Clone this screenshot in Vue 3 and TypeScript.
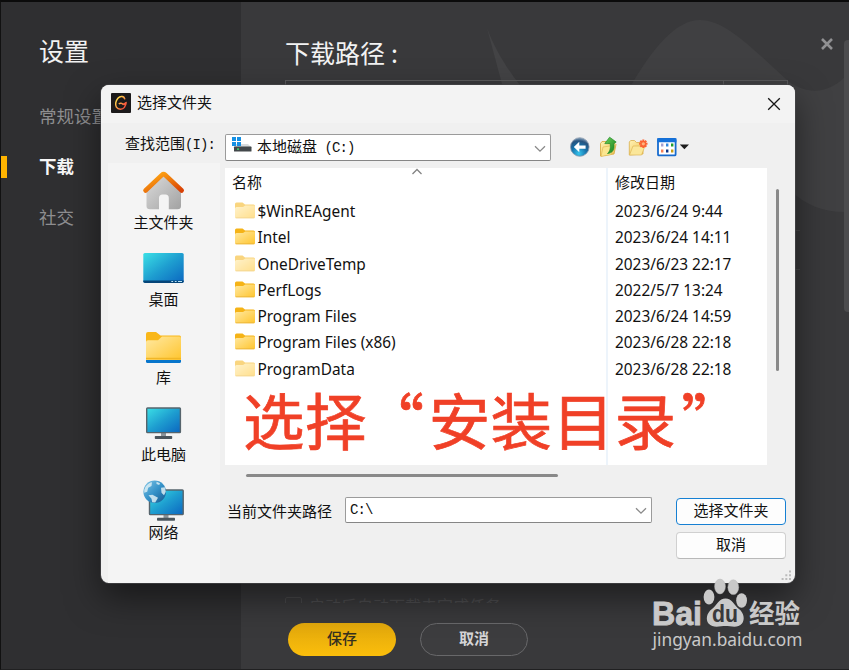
<script setup lang="ts">
interface Entry {
  name: string
  date: string
  hidden: boolean
}

const nav: { label: string; active: boolean }[] = [
  { label: '常规设置', active: false },
  { label: '下载', active: true },
  { label: '社交', active: false },
]

const entries: Entry[] = [
  { name: '$WinREAgent', date: '2023/6/24 9:44', hidden: true },
  { name: 'Intel', date: '2023/6/24 14:11', hidden: false },
  { name: 'OneDriveTemp', date: '2023/6/23 22:17', hidden: true },
  { name: 'PerfLogs', date: '2022/5/7 13:24', hidden: false },
  { name: 'Program Files', date: '2023/6/24 14:59', hidden: false },
  { name: 'Program Files (x86)', date: '2023/6/28 22:18', hidden: false },
  { name: 'ProgramData', date: '2023/6/28 22:18', hidden: true },
]
</script>

<template>
  <div class="screen">
    <aside class="sidebar">
      <h1>设置</h1>
      <nav>
        <div v-for="n in nav" :key="n.label" class="nav-item" :class="{ active: n.active }">{{ n.label }}</div>
      </nav>
    </aside>

    <main class="main">
      <svg class="waves" width="608" height="250" viewBox="241 0 608 250">
        <path d="M487 28 L502 84 L530 104 L519 84 C507 68 495 50 487 28Z" fill="#434345" />
        <path d="M632 84 C653 48 676 20 700 20 C726 20 754 50 788 81 C808 96 832 94 849 72 V212 C826 213 806 206 790 190 L640 150Z" fill="#404042" />
      </svg>
      <div class="path-section">
        <h2>下载路径<span>:</span></h2>
        <div class="path-box"><div class="path-value"></div></div>
        <div class="second-box"></div>
      </div>
      <div class="ghost">
        <i></i><span>启动后自动下载未完成任务</span>
      </div>
      <div class="actions">
        <button class="pill save">保存</button>
        <button class="pill cancel">取消</button>
      </div>
      <svg class="page-close" width="14" height="14" viewBox="0 0 14 14">
        <path d="M2 2 L12 12 M12 2 L2 12" stroke="#919193" stroke-width="2.6" />
      </svg>
      <div class="page-scroll"></div>
    </main>

    <section class="dialog">
      <header class="titlebar">
        <svg width="20" height="20" viewBox="0 0 20 20">
          <defs>
            <linearGradient id="logo" x1="0" y1="0" x2="1" y2="1">
              <stop offset="0.2" stop-color="#ffd34b" />
              <stop offset="0.9" stop-color="#f5483b" />
            </linearGradient>
          </defs>
          <rect width="20" height="20" rx="1" fill="#1c1a1b" />
          <path d="M13.8 6.4 C13.4 2.8 9.2 2.6 6.9 5.2 C4.6 8 4 12 5.4 14.2 C7.2 17 11.6 16.8 13.4 14.4 C14.4 13 14.8 11.4 14.9 9.8 L12.2 11.4 C11 10 9.2 9.8 7.8 11" fill="none" stroke="url(#logo)" stroke-width="1.5" stroke-linejoin="round" />
          <path d="M11.6 11.4 L15.8 8.4 L15 12.4Z" fill="#fb5a3e" />
        </svg>
        <span class="title">选择文件夹</span>
        <svg class="close" width="14" height="14" viewBox="0 0 14 14">
          <path d="M1.2 1.2 L12.8 12.8 M12.8 1.2 L1.2 12.8" stroke="#161616" stroke-width="1.3" />
        </svg>
      </header>

      <div class="toolbar">
        <label>查找范围<span class="mono">(I):</span></label>
        <div class="combo drive">
          <svg width="20" height="16" viewBox="0 0 20 16">
            <path d="M4 7 H16 L19 10 H2Z" fill="#d9dcde" />
            <path d="M0 0h4v4H0zM5 0h4v4H5zM0 5h4v4H0zM5 5h4v4H5z" fill="#1590e4" />
            <rect x="2" y="9.6" width="17.5" height="5" rx=".6" fill="#43484b" />
            <rect x="5" y="11.4" width="2" height="1.4" fill="#36df6b" />
          </svg>
          <span class="combo-text">本地磁盘<span class="mono">&nbsp;(C:)</span></span>
          <svg class="chev" width="12" height="8" viewBox="0 0 12 8"><path d="M1 1.2 L6 6.2 L11 1.2" fill="none" stroke="#8a8a8a" stroke-width="1.3" /></svg>
        </div>
        <svg class="tools" width="122" height="24" viewBox="568 135 122 24">
          <defs>
            <radialGradient id="back" cx=".45" cy=".85" r=".9">
              <stop offset="0" stop-color="#35c5ee" />
              <stop offset=".45" stop-color="#1672ab" />
              <stop offset=".75" stop-color="#28547f" />
              <stop offset="1" stop-color="#a6bacd" />
            </radialGradient>
            <linearGradient id="paper" x1="0" y1="0" x2="1" y2="1">
              <stop offset="0" stop-color="#fff2b5" />
              <stop offset="1" stop-color="#efc150" />
            </linearGradient>
            <linearGradient id="green" x1="0" y1="0" x2="1" y2="1">
              <stop offset="0" stop-color="#6ed35b" />
              <stop offset="1" stop-color="#137b1c" />
            </linearGradient>
          </defs>
          <circle cx="579.8" cy="147" r="9.3" fill="url(#back)" stroke="#8b9cae" stroke-width=".8" />
          <path d="M573.8 147 L579.3 141.7 V145.4 H585.6 V148.7 H579.3 V152.3Z" fill="#fff" />
          <path d="M600.5 156 V143.5 L602 141.5 H606 L608 143.5 H615 L616 144.5 L614 154Z" fill="url(#paper)" stroke="#d5a638" stroke-width=".8" />
          <path d="M603 147 L613 145.5 L611.5 154.5 L601 156.5Z" fill="#fbe690" stroke="#ddb34c" stroke-width=".6" />
          <path d="M607.5 153.5 C610.4 151 610.6 147.5 610.2 143.6 H604.8 L609.6 137.2 L616.2 142 L613.8 143.6 C615 149.5 612.5 153.2 607.5 153.5Z" fill="url(#green)" stroke="#218b26" stroke-width=".7" />
          <path d="M629.3 155 V142 L630.7 140.5 H634.5 L636.5 142.5 H643 V154Z" fill="url(#paper)" stroke="#d9af4c" stroke-width=".8" />
          <path d="M629.5 155 L633 146 H645 L641.5 155Z" fill="#fbe79a" stroke="#dfb758" stroke-width=".7" />
          <path d="M643.3 139.6 V148 M639.1 143.8 H647.5 M640.3 140.8 L646.3 146.8 M646.3 140.8 L640.3 146.8" stroke="#fb6233" stroke-width="2" />
          <circle cx="643.3" cy="143.8" r="1.6" fill="#ffb27c" />
          <rect x="658" y="139" width="17.6" height="16.4" rx="1" fill="#fff" stroke="#176bce" stroke-width="1.8" />
          <path d="M657.2 138.2 H676.4 V142.2 H657.2Z" fill="#1571d9" />
          <path d="M661 143.5h2.4v3H661z" fill="#a5a0cf" /><path d="M666 143.5h2.4v3H666z" fill="#3387dc" /><path d="M671 143.5h2.4v3H671z" fill="#1e9c2b" />
          <path d="M661 149.6h2.4v3H661z" fill="#f67f55" /><path d="M666 149.6h2.4v3H666z" fill="#0c3384" /><path d="M671 149.6h2.4v3H671z" fill="#c99b10" />
          <path d="M679.8 144.5 H689 L684.4 149.3Z" fill="#1c1c1c" />
        </svg>
      </div>

      <div class="body">
        <div class="places">
          <svg width="0" height="0" class="defs">
            <defs>
              <linearGradient id="roof" x1="0" y1="0" x2="1" y2="1">
                <stop offset=".2" stop-color="#fb9d12" /><stop offset="1" stop-color="#d84005" />
              </linearGradient>
              <linearGradient id="wall" x1="0" y1="0" x2="1" y2="1">
                <stop offset="0" stop-color="#dcdcdc" /><stop offset="1" stop-color="#a2a2a2" />
              </linearGradient>
              <linearGradient id="blue" x1="0" y1="0" x2="1" y2="1">
                <stop offset="0" stop-color="#3be0e6" /><stop offset=".5" stop-color="#1e9ed0" /><stop offset="1" stop-color="#0b66c0" />
              </linearGradient>
              <linearGradient id="yellow" x1="0" y1="0" x2="1" y2="1">
                <stop offset="0" stop-color="#ffe9a3" /><stop offset="1" stop-color="#ffc52e" />
              </linearGradient>
              <linearGradient id="globe" x1="0" y1="0" x2="1" y2="1">
                <stop offset="0" stop-color="#80c5e6" /><stop offset=".5" stop-color="#3693c9" /><stop offset="1" stop-color="#15578e" />
              </linearGradient>
            </defs>
          </svg>
          <div class="place">
            <svg width="48" height="48" viewBox="0 0 48 48">
              <path d="M6.5 24 L23.5 8 L41 24 V39 Q41 42.3 37.5 42.3 H28.8 V31 Q28.8 27.5 25.5 27.5 H22.5 Q19 27.5 19 31 V42.3 H10 Q6.5 42.3 6.5 39Z" fill="url(#wall)" />
              <path d="M5.5 23.5 L22 7.8 Q23.5 6.4 25 7.8 L41.7 23.5" fill="none" stroke="url(#roof)" stroke-width="4.6" stroke-linecap="round" stroke-linejoin="round" />
            </svg>
            <span>主文件夹</span>
          </div>
          <div class="place">
            <svg width="48" height="48" viewBox="0 0 48 48">
              <rect x="3.3" y="9" width="40.4" height="29.8" rx="1.6" fill="url(#blue)" />
              <path d="M3.3 36.6 H43.7 V37.2 Q43.7 38.9 42 38.9 H5 Q3.3 38.9 3.3 37.2Z" fill="#064578" />
              <path d="M31.3 37h1.8v1h-1.8zM34.8 37h1.8v1h-1.8zM38 37h4v1h-4z" fill="#b5e0f5" />
            </svg>
            <span>桌面</span>
          </div>
          <div class="place">
            <svg width="48" height="48" viewBox="0 0 48 48">
              <path d="M6 14 V12 Q6 10 8 10 H16 L20.5 13.5 H39.5 Q41 13.5 41 15.2 V20 H6Z" fill="#f9b719" />
              <path d="M6 20 Q6 18.2 8 18.2 H18 L22 14.5 H39.3 Q41 14.5 41 16.2 V38 H6Z" fill="url(#yellow)" />
              <path d="M6 35.8 H41 V37.2 H6Z" fill="#f1b626" />
              <path d="M6 38 H41 V39.5 Q41 41 39.5 41 H7.5 Q6 41 6 39.5Z" fill="#0875cb" />
            </svg>
            <span>库</span>
          </div>
          <div class="place">
            <svg width="48" height="48" viewBox="0 0 48 48">
              <rect x="21" y="33" width="5" height="6" fill="#8d969d" />
              <rect x="14.8" y="37" width="17.4" height="2.9" rx=".7" fill="#4a555d" />
              <rect x="6.7" y="9" width="33.7" height="24.6" rx=".8" fill="url(#blue)" stroke="#56646c" stroke-width="1.4" />
            </svg>
            <span>此电脑</span>
          </div>
          <div class="place">
            <svg width="48" height="48" viewBox="0 0 48 48">
              <rect x="23.5" y="37" width="5" height="6" fill="#8d969d" />
              <rect x="17" y="40.8" width="18" height="2.9" rx=".7" fill="#4a555d" />
              <rect x="9.5" y="13" width="33.7" height="24.6" rx=".8" fill="url(#blue)" stroke="#56646c" stroke-width="1.4" />
              <g transform="translate(0 .8)">
                <circle cx="14.7" cy="14" r="11.3" fill="url(#globe)" />
                <path d="M5.5 9 Q9 4.5 12 4.4 L11.5 8.2 L8.2 10 L7.2 14 L4.2 15 Q3.8 12 5.5 9Z M16.5 4 L20 5.4 L19.2 7.2 L16.5 6.2Z M21 10 L24.8 9.5 L25.8 14 L24 17.5 L21.5 15Z M8.5 17.5 L12.5 17 L18 20 L15.2 24.6 L12.2 24.5 L11.5 21Z" fill="#dceff5" opacity=".85" />
              </g>
            </svg>
            <span>网络</span>
          </div>
        </div>

        <div class="content">
          <div class="list-row">
            <div class="list">
              <div class="col names">
                <div class="head">名称
                  <svg class="sort" width="12" height="7" viewBox="0 0 12 7"><path d="M1.5 6 L6 1.5 L10.5 6" fill="none" stroke="#838383" stroke-width="1.3" /></svg>
                </div>
                <div v-for="e in entries" :key="e.name" class="row">
                  <svg :class="{ dim: e.hidden }" width="20" height="17" viewBox="0 0 20 17">
                    <path d="M0 6 V2 Q0 .5 1.5 .5 H7.5 L10 2.5 H18.5 Q20 2.5 20 4 V8 H0Z" fill="#f5b317" />
                    <path d="M0 6.5 Q0 5 1.5 5 H8 L10.3 3.4 H18.7 Q20 3.4 20 4.8 V15 Q20 16.3 18.5 16.3 H1.5 Q0 16.3 0 15Z" fill="url(#yellow)" />
                    <path d="M.6 15.8 H19.4" stroke="#eab137" stroke-width=".8" />
                  </svg>
                  <span>{{ e.name }}</span>
                </div>
              </div>
              <div class="col dates">
                <div class="head">修改日期</div>
                <div v-for="e in entries" :key="e.name" class="row"><span>{{ e.date }}</span></div>
              </div>
              <div class="annotation">选择<span class="open">“</span>安装目录<span class="end">”</span></div>
            </div>
            <div class="vscroll"></div>
          </div>
          <div class="hscroll"></div>
          <div class="footer">
            <span class="path-label">当前文件夹路径</span>
            <div class="combo path">
              <span class="mono">C:\</span>
              <svg class="chev" width="12" height="8" viewBox="0 0 12 8"><path d="M1 1.2 L6 6.2 L11 1.2" fill="none" stroke="#8a8a8a" stroke-width="1.3" /></svg>
            </div>
            <div class="buttons">
              <button class="btn primary">选择文件夹</button>
              <button class="btn">取消</button>
            </div>
          </div>
        </div>
      </div>
      <svg class="grip" width="11" height="11" viewBox="0 0 11 11">
        <path d="M8 .5h2v2H8zM4.3 4.2h2v2h-2zM8 4.2h2v2H8zM.6 8h2v2h-2zM4.3 8h2v2h-2zM8 8h2v2H8z" fill="#bcbcbc" />
      </svg>
    </section>

    <svg class="watermark" width="160" height="80" viewBox="648 574 160 80">
      <g fill="#c9c9c9">
        <ellipse cx="709" cy="597" rx="5.4" ry="7.5" />
        <ellipse cx="720" cy="586.5" rx="5.4" ry="7.4" stroke="#b9b9b9" stroke-width=".5" />
        <ellipse cx="733.3" cy="587.2" rx="5.4" ry="7.4" stroke="#b9b9b9" stroke-width=".5" />
        <ellipse cx="741.6" cy="600.5" rx="5.4" ry="7.3" />
        <path d="M725.5 598.5 C732 598.5 734 605 739 609 C744 613 745 619.5 742 623.5 C738 628.5 731 626 725.5 626 C720 626 713 628.5 708.5 623.5 C705.5 619.5 706.5 613 712 609 C717 605 719 598.5 725.5 598.5Z" />
        <text x="652" y="625.3" class="wm-bai" textLength="50" lengthAdjust="spacingAndGlyphs">Bai</text>
        <text x="749" y="623" class="wm-cn" textLength="51" lengthAdjust="spacingAndGlyphs">经验</text>
        <text x="652.5" y="645.8" class="wm-url" textLength="150" lengthAdjust="spacingAndGlyphs">jingyan.baidu.com</text>
      </g>
      <text x="712" y="622.3" class="wm-du" textLength="26" lengthAdjust="spacingAndGlyphs">du</text>
    </svg>
  </div>
</template>

<style>
body {
  margin: 0;
  background: #2f2f31;
  overflow: hidden;
}
</style>

<style scoped>
* {
  box-sizing: border-box;
}
.screen {
  position: relative;
  display: flex;
  width: 849px;
  height: 670px;
  overflow: hidden;
  border-top: 2px solid #0b0b0b;
  border-left: 1px solid #111;
  border-bottom: 1px solid #202021;
  font-family: "Noto Sans CJK SC", sans-serif;
  background: #39393b;
}
.sidebar {
  width: 240px;
  background: #2f2f31;
}
h1 {
  margin: 31px 0 0 38px;
  font-size: 25px;
  font-weight: 400;
  line-height: 34px;
  color: #f2f2f2;
}
nav {
  margin-top: 23px;
}
.nav-item {
  height: 22px;
  margin-top: 28.3px;
  padding-left: 38px;
  font-size: 17.5px;
  line-height: 20px;
  color: #8e8e90;
}
.nav-item:first-child {
  margin-top: 39px;
}
.nav-item.active {
  padding-left: 32px;
  border-left: 6px solid #ffb400;
  font-weight: 700;
  color: #f7f7f7;
}
.main {
  position: relative;
  flex: 1;
  background: #39393b;
}
.waves {
  position: absolute;
  left: 0;
  top: -2px;
}
.path-section {
  position: relative;
  padding: 32px 0 0 44px;
  height: 595px;
}
h2 {
  margin: 0;
  font-size: 25px;
  font-weight: 400;
  line-height: 36px;
  color: #f2f2f2;
}
h2 span {
  margin-left: 6px;
}
.path-box {
  width: 503px;
  height: 40px;
  margin-top: 10px;
  border: 1px solid #59595b;
}
.path-value {
  width: 438px;
  height: 38px;
  border-right: 1px solid #59595b;
}
.second-box {
  width: 515px;
  height: 40px;
  margin-top: 110px;
  border: 1px solid #484849;
  border-right: 0;
}
.ghost {
  display: flex;
  gap: 7px;
  height: 6px;
  margin-left: 44px;
  overflow: hidden;
  font-size: 16px;
  line-height: 16px;
  color: #4c4c4e;
}
.ghost i {
  width: 17px;
  height: 17px;
  border: 1px solid #48484a;
  border-radius: 2px;
}
.actions {
  display: flex;
  gap: 24px;
  padding: 20px 0 0 47px;
}
.pill {
  width: 108px;
  height: 33px;
  padding: 0 0 3px;
  border-radius: 17px;
  font-family: inherit;
  font-size: 15px;
  line-height: 28px;
}
.save {
  border: 0;
  background: linear-gradient(#e1a70c, #fbbe0b);
  color: #35301f;
  font-weight: 500;
}
.cancel {
  border: 1.5px solid #68686a;
  background: #3d3d3f;
  color: #d4d4d6;
  font-weight: 700;
}
.page-close {
  position: absolute;
  left: 578.5px;
  top: 34.5px;
}
.page-scroll {
  position: absolute;
  left: 603px;
  top: 38px;
  width: 9px;
  height: 272px;
  border-radius: 4px;
  background: #4c4c4e;
}
.dialog {
  position: absolute;
  left: 100px;
  top: 83px;
  width: 694px;
  height: 498px;
  border-radius: 8px;
  overflow: hidden;
  background: #f0f0f0;
  box-shadow: 0 0 0 1px rgba(70, 70, 72, 0.7), 0 14px 34px rgba(0, 0, 0, 0.5);
  font-size: 15px;
  color: #111;
}
.titlebar {
  display: flex;
  align-items: center;
  height: 38px;
  padding: 0 14px 2px 10px;
  background: #f3f3f3;
}
.title {
  margin-left: 6px;
  margin-top: -3px;
  line-height: 20px;
}
.close {
  margin-left: auto;
  margin-top: 1px;
}
.toolbar {
  display: flex;
  align-items: center;
  height: 40px;
  padding: 8px 0 0 24px;
}
.toolbar label {
  width: 100px;
  line-height: 20px;
  margin-top: -7px;
  white-space: nowrap;
}
.mono {
  font-family: "Liberation Mono", "Noto Sans CJK SC", monospace;
  font-size: 14px;
  letter-spacing: -0.9px;
}
.combo {
  display: flex;
  align-items: center;
  border: 1px solid #9b9b9b;
  border-bottom-color: #868686;
  border-radius: 2px;
  background: #fff;
}
.drive {
  width: 326px;
  height: 27px;
  padding: 0 4px 0 6px;
}
.drive > svg:first-child {
  margin-top: -4px;
}
.combo-text {
  margin-left: 5px;
  line-height: 20px;
  margin-top: -1px;
}
.chev {
  margin-left: auto;
  margin-top: 3px;
}
.tools {
  margin-left: 17px;
}
.body {
  display: flex;
  height: 420px;
  padding-left: 7px;
}
.places {
  width: 112px;
  padding-top: 4px;
  background: #f4f4f4;
}
.defs {
  position: absolute;
}
.place {
  display: flex;
  flex-direction: column;
  align-items: center;
  height: 77.4px;
  line-height: 15px;
}
.place span {
  margin: -1px 1px 0 0;
}
.content {
  flex: 1;
  padding: 5px 0 0 5px;
}
.list-row {
  display: flex;
}
.list {
  position: relative;
  display: flex;
  width: 542px;
  height: 297px;
  background: #fff;
  font-size: 15px;
}
.names {
  width: 383px;
  padding-left: 7px;
  border-right: 2px solid #edf4fb;
}
.dates {
  padding-left: 7px;
}
.head {
  position: relative;
  height: 30.5px;
  line-height: 28px;
}
.sort {
  position: absolute;
  left: 179px;
  top: 0;
}
.row {
  display: flex;
  align-items: center;
  height: 26.25px;
  font-family: "Noto Sans", "Open Sans", sans-serif;
  font-size: 15.4px;
  line-height: 20px;
  white-space: pre;
}
.row span {
  margin-top: 1px;
}
.row svg {
  margin: -2px 2.5px 0 3px;
}
.dim {
  opacity: 0.55;
}
.annotation {
  position: absolute;
  left: 18px;
  top: 221px;
  font-size: 61.5px;
  line-height: 60px;
  letter-spacing: 0.4px;
  white-space: nowrap;
  color: #f04027;
  -webkit-text-stroke: 0.7px #f04027;
}
.open {
  margin: 0 4px 0 -4px;
}
.end {
  margin-left: 5px;
}
.vscroll {
  width: 2.5px;
  height: 182px;
  margin: 21px 0 0 9px;
  border-radius: 2px;
  background: #898989;
}
.hscroll {
  width: 312px;
  height: 2.5px;
  margin: 9px 0 0 21px;
  border-radius: 2px;
  background: #898989;
}
.footer {
  display: flex;
  padding: 20.5px 0 0 2px;
}
.path-label {
  width: 118px;
  line-height: 28px;
}
.path {
  width: 307px;
  height: 26px;
  padding: 0 4px 0 4px;
}
.path .chev {
  margin-top: 2px;
}
.buttons {
  display: flex;
  flex-direction: column;
  gap: 7px;
  margin: 1px 0 0 24px;
}
.btn {
  width: 110px;
  height: 27px;
  padding: 0 0 3px;
  border: 1px solid #d0d0d0;
  border-bottom-color: #b9b9b9;
  border-radius: 4px;
  background: #fdfdfd;
  font-family: inherit;
  font-size: 15px;
  line-height: 22px;
  color: #111;
}
.primary {
  border: 1.5px solid #1680d3;
}
.grip {
  position: absolute;
  right: 3px;
  bottom: 2px;
}
.watermark {
  position: absolute;
  left: 647px;
  top: 572px;
}
.wm-bai {
  font: 700 34px "Liberation Sans", sans-serif;
  stroke: #c9c9c9;
  stroke-width: 0.9px;
}
.wm-du {
  font: 700 23px "Liberation Sans", sans-serif;
  fill: #39393b;
}
.wm-cn {
  font: 700 26px "Noto Sans CJK SC", sans-serif;
}
.wm-url {
  font: 400 17.5px "Noto Sans", sans-serif;
}
</style>
